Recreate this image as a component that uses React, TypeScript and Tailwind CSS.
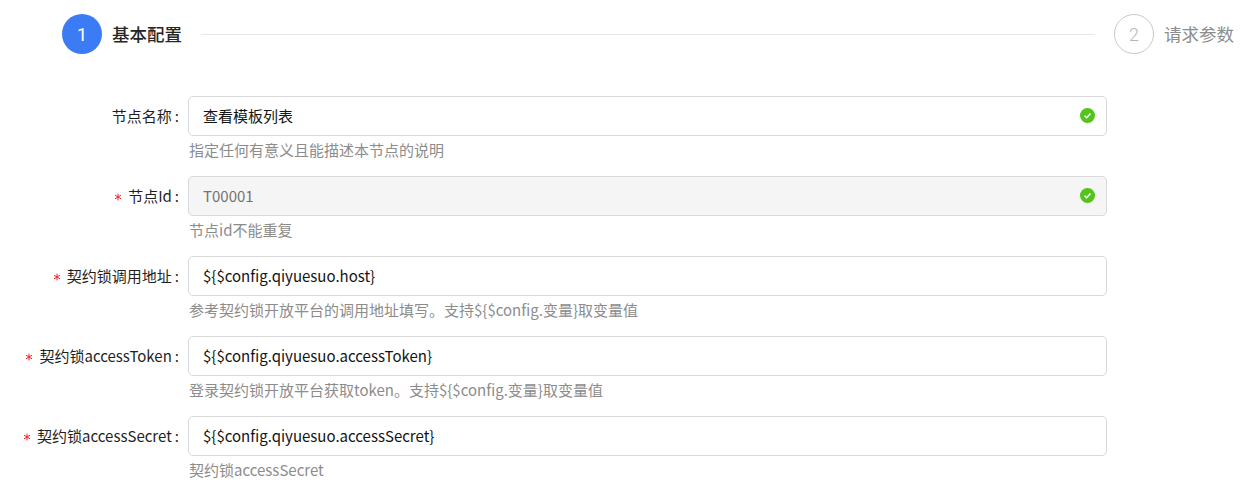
import React from "react";

function Check() {
  return (
    <svg viewBox="0 0 16 16" className="w-[15px] h-[15px] -mt-[2px]">
      <circle cx="8" cy="8" r="8" fill="#52c41a" />
      <path d="M4.8 8.2 7.1 10.4 11.2 5.9" fill="none" stroke="#fff" strokeWidth="1.6" />
    </svg>
  );
}

function Star() {
  return (
    <svg viewBox="0 0 8 8" className="w-[8px] h-[8px] mr-[6px] mt-[1px]">
      <path d="M4 .6V7.4M1 2.2 7 5.8M7 2.2 1 5.8" fill="none" stroke="#f5222d" strokeWidth="1" />
    </svg>
  );
}

type RowProps = {
  label: string;
  required?: boolean;
  value: string;
  help: string;
  disabled?: boolean;
  success?: boolean;
};

function Row({ label, required, value, help, disabled, success }: RowProps) {
  return (
    <div className="flex h-[80px]">
      <label className="w-[188px] shrink-0 h-[40px] flex items-center justify-end pr-[9px] text-[15px] text-[#1f1f1f]">
        {required && <Star />}
        {label}
        <span className="ml-[3px]">:</span>
      </label>
      <div className="w-[919px] shrink-0">
        <div
          className={
            disabled
              ? "h-[40px] rounded-[5px] border border-[#d9d9d9] bg-[#f5f5f5] flex items-center justify-between pl-[14px] pr-[11px] text-[15px] text-[#737373]"
              : "h-[40px] rounded-[5px] border border-[#d9d9d9] bg-white flex items-center justify-between pl-[14px] pr-[11px] text-[15px] text-[#141414]"
          }
        >
          <span>{value}</span>
          {success && <Check />}
        </div>
        <div className="pl-[1px] h-[28px] flex items-center text-[15px] text-[#8c8c8c]">{help}</div>
      </div>
    </div>
  );
}

export default function App() {
  return (
    <div className="w-[1247px] h-[503px] overflow-hidden bg-white font-['Noto_Sans_CJK_SC',sans-serif]">
      <div className="flex items-center h-[40px] mt-[14px] pl-[62px]">
        <div className="w-[40px] h-[40px] rounded-full bg-[#3b7cf5] text-white flex items-center justify-center text-[18px] font-['Roboto',sans-serif]">
          1
        </div>
        <div className="ml-[10px] w-[70px] text-[17.5px] font-medium text-[#262626]">基本配置</div>
        <div className="ml-[19px] w-[894px] h-px bg-[#e8e8e8]" />
        <div className="ml-[19px] w-[40px] h-[40px] rounded-full border border-[#c9c9c9] text-[#b5b5b5] flex items-center justify-center text-[18px] font-light font-['Roboto',sans-serif]">
          2
        </div>
        <div className="ml-[10px] text-[17.5px] text-[#8c8c8c]">请求参数</div>
      </div>
      <div className="mt-[42px]">
        <Row label="节点名称" value="查看模板列表" help="指定任何有意义且能描述本节点的说明" success />
        <Row label="节点Id" required disabled value="T00001" help="节点id不能重复" success />
        <Row
          label="契约锁调用地址"
          required
          value="${$config.qiyuesuo.host}"
          help="参考契约锁开放平台的调用地址填写。支持${$config.变量}取变量值"
        />
        <Row
          label="契约锁accessToken"
          required
          value="${$config.qiyuesuo.accessToken}"
          help="登录契约锁开放平台获取token。支持${$config.变量}取变量值"
        />
        <Row label="契约锁accessSecret" required value="${$config.qiyuesuo.accessSecret}" help="契约锁accessSecret" />
      </div>
    </div>
  );
}
